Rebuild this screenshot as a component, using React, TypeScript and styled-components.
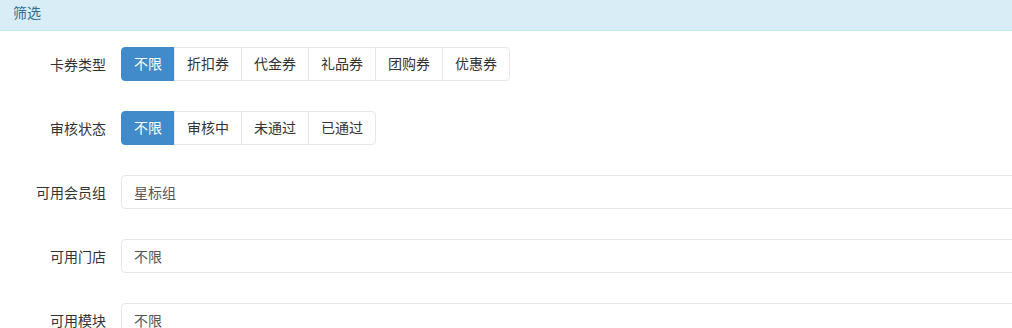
import styled, { createGlobalStyle } from "styled-components";

const GlobalStyle = createGlobalStyle`
    body {
        margin: 0;
        background: #fff;
        font-family: "Liberation Sans", "Noto Sans CJK SC", sans-serif;
        font-size: 14px;
        color: #333;
        overflow: hidden;
    }
`;

const cardTypes = ["不限", "折扣券", "代金券", "礼品券", "团购券", "优惠券"];
const auditStates = ["不限", "审核中", "未通过", "已通过"];

const App = () => {
    return (
        <>
            <GlobalStyle />
            <StyledPanel>
                <StyledHeading>筛选</StyledHeading>
                <StyledForm>
                    <Row>
                        <Label>卡券类型</Label>
                        <BtnGroup>
                            {cardTypes.map((t, i) => (
                                <Btn key={t} $active={i === 0}>{t}</Btn>
                            ))}
                        </BtnGroup>
                    </Row>
                    <Row>
                        <Label>审核状态</Label>
                        <BtnGroup>
                            {auditStates.map((t, i) => (
                                <Btn key={t} $active={i === 0}>{t}</Btn>
                            ))}
                        </BtnGroup>
                    </Row>
                    <Row>
                        <Label>可用会员组</Label>
                        <FieldClip>
                            <Field readOnly value="星标组" />
                        </FieldClip>
                    </Row>
                    <Row>
                        <Label>可用门店</Label>
                        <FieldClip>
                            <Field readOnly value="不限" />
                        </FieldClip>
                    </Row>
                    <Row>
                        <Label>可用模块</Label>
                        <FieldClip>
                            <Field readOnly value="不限" />
                        </FieldClip>
                    </Row>
                </StyledForm>
            </StyledPanel>
        </>
    );
};

export default App;

const StyledPanel = styled.div`
    width: 100%;
    overflow: hidden;
`;

const StyledHeading = styled.div`
    height: 30px;
    line-height: 26px;
    padding: 0 13px;
    background: #d9edf7;
    border-bottom: 1px solid #bce8f1;
    color: #31708f;
    font-size: 14px;
`;

const StyledForm = styled.div`
    display: flex;
    flex-direction: column;
    gap: 30px;
    padding-top: 16px;
`;

const Row = styled.div`
    display: grid;
    grid-template-columns: 121px 1fr;
    align-items: center;
    height: 34px;
`;

const Label = styled.label`
    text-align: right;
    padding-right: 15px;
    color: #333;
    font-size: 14px;
`;

const BtnGroup = styled.div`
    display: flex;
`;

const Btn = styled.button<{ $active?: boolean }>`
    height: 34px;
    padding: 0 12px;
    margin-left: -1px;
    font-family: inherit;
    font-size: 14px;
    line-height: 32px;
    color: ${(p) => (p.$active ? "#fff" : "#333")};
    background: ${(p) => (p.$active ? "#428bca" : "#fff")};
    border: 1px solid ${(p) => (p.$active ? "#428bca" : "#e6e6e6")};
    border-radius: 0;
    cursor: pointer;

    &:first-child {
        margin-left: 0;
        border-radius: 4px 0 0 4px;
    }
    &:last-child {
        border-radius: 0 4px 4px 0;
    }
`;

const FieldClip = styled.div`
    overflow: hidden;
    height: 34px;
`;

const Field = styled.input`
    display: block;
    width: calc(100% + 20px);
    height: 34px;
    box-sizing: border-box;
    padding: 0 12px;
    font-family: inherit;
    font-size: 14px;
    color: #555;
    background: #fff;
    border: 1px solid #e5e5e5;
    border-radius: 4px;
    outline: none;
`;
